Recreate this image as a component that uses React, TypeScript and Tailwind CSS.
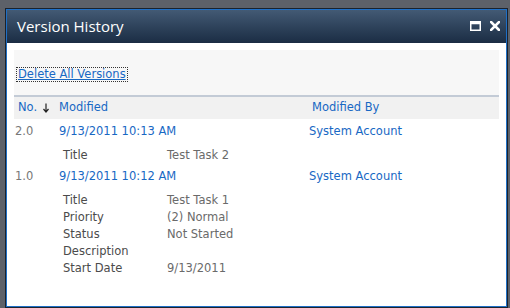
import React from 'react';

const font = { fontFamily: '"DejaVu Sans", Verdana, sans-serif' };

type Field = { label: string; value: string };

const versions: { no: string; modified: string; by: string; fields: Field[] }[] = [
  {
    no: '2.0',
    modified: '9/13/2011 10:13 AM',
    by: 'System Account',
    fields: [{ label: 'Title', value: 'Test Task 2' }],
  },
  {
    no: '1.0',
    modified: '9/13/2011 10:12 AM',
    by: 'System Account',
    fields: [
      { label: 'Title', value: 'Test Task 1' },
      { label: 'Priority', value: '(2) Normal' },
      { label: 'Status', value: 'Not Started' },
      { label: 'Description', value: '' },
      { label: 'Start Date', value: '9/13/2011' },
    ],
  },
];

function MaximizeIcon() {
  return (
    <svg width="11" height="10" viewBox="0 0 11 10" className="block">
      <rect x="0.75" y="0.75" width="9.5" height="8.5" fill="none" stroke="#fff" strokeWidth="1.5" />
      <rect x="0.75" y="0.75" width="9.5" height="2.5" fill="#fff" />
    </svg>
  );
}

function CloseIcon() {
  return (
    <svg width="10" height="10" viewBox="0 0 10 10" className="block">
      <path d="M1 1 L9 9 M9 1 L1 9" stroke="#fff" strokeWidth="2.6" strokeLinecap="square" />
    </svg>
  );
}

function SortArrow() {
  return (
    <svg width="6" height="10" viewBox="0 0 6 10" className="ml-[6px] inline-block">
      <path d="M3 0.5 V9 M0.5 6 L3 9 L5.5 6" stroke="#222" strokeWidth="1.2" fill="none" />
    </svg>
  );
}

export default function App() {
  return (
    <div className="w-[510px] h-[308px] overflow-hidden bg-[#5d6169] pt-[8px] pl-[5px] pr-[2px]">
      <div className="h-[300px] border border-[#1a222d]">
        <div className="h-full border border-[#1f6fc5] flex flex-col bg-white">
          {/* Title bar */}
          <div className="h-[33px] shrink-0 flex items-center justify-between pl-[10px] pr-[6px] bg-gradient-to-b from-[#435a74] to-[#1b2d44]">
            <span
              className="text-[15px] text-white"
              style={{ fontFamily: '"Open Sans", "Noto Sans", sans-serif' }}
            >
              Version History
            </span>
            <div className="flex items-center gap-[9px] pb-[2px]">
              <MaximizeIcon />
              <CloseIcon />
            </div>
          </div>

          {/* Body */}
          <div className="flex-1 pt-[7px] pl-[7px] pr-[7px] text-[11.5px]" style={font}>
            {/* Toolbar */}
            <div className="h-[47px] bg-[#f7f7f7] border-b-2 border-[#c3cbd6] flex items-center pl-[3px] pt-[3px]">
              <a
                href="#"
                className="text-[#1868c4] underline outline outline-1 outline-dotted outline-[#333] px-[1px] leading-[13px]"
              >
                Delete All Versions
              </a>
            </div>

            {/* Header */}
            <div className="h-[22px] bg-[#f1f1f1] flex items-center text-[#1868c4]">
              <div className="w-[45px] pl-[4px] flex items-center">
                No.
                <SortArrow />
              </div>
              <div className="w-[253px]">Modified</div>
              <div>Modified By</div>
            </div>

            {/* Rows */}
            {versions.map((v) => (
              <div key={v.no}>
                <div className="h-[22px] flex items-center mt-[2px]">
                  <div className="w-[45px] pl-[1px] text-[#777]">{v.no}</div>
                  <div className="w-[250px] text-[#1868c4]">{v.modified}</div>
                  <div className="text-[#1868c4]">{v.by}</div>
                </div>
                <div className="pt-[4px] pl-[49px]">
                  {v.fields.map((f) => (
                    <div key={f.label} className="h-[17px] flex items-center">
                      <div className="w-[104px] text-[#4b4b4b]">{f.label}</div>
                      <div className="text-[#6a6a6a]">{f.value}</div>
                    </div>
                  ))}
                </div>
              </div>
            ))}
          </div>
        </div>
      </div>
    </div>
  );
}
